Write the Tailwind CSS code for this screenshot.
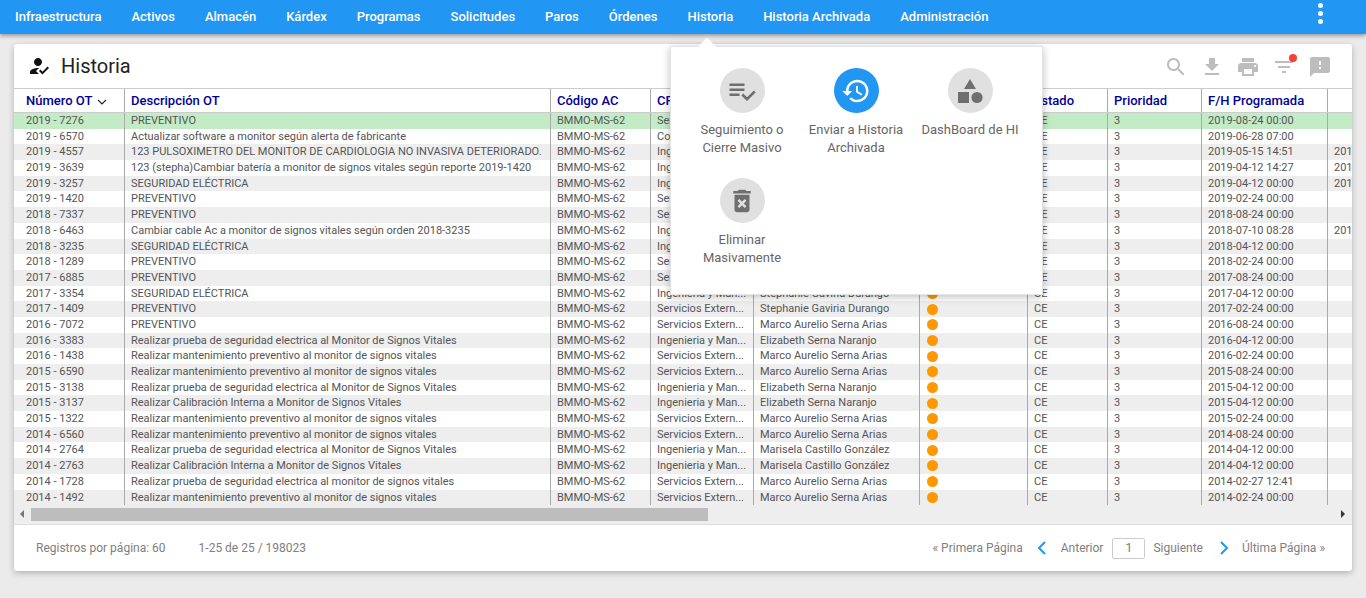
<!DOCTYPE html>
<html lang="es">
<head>
    <meta charset="UTF-8">
    <title>Historia</title>
    <script src="https://cdn.jsdelivr.net/npm/@tailwindcss/browser@4"></script>
</head>
<body class="bg-[#ebebeb] h-[598px] overflow-hidden font-['Roboto',sans-serif]">

<!-- Nav -->
<nav class="h-[34px] bg-[#2196f3] shadow-[0_2px_4px_rgba(0,0,0,0.35)] flex items-center pl-[15px] relative z-20">
    <div class="flex gap-[30px] text-white text-[13px] font-medium leading-[34px]">
        <a>Infraestructura</a><a>Activos</a><a>Almacén</a><a>Kárdex</a><a>Programas</a><a>Solicitudes</a><a>Paros</a><a>Órdenes</a><a>Historia</a><a>Historia Archivada</a><a>Administración</a>
    </div>
    <div class="ml-auto mr-[43px] mb-[8px] flex flex-col gap-[3px]">
        <span class="w-[5px] h-[5px] rounded-full bg-white"></span>
        <span class="w-[5px] h-[5px] rounded-full bg-white"></span>
        <span class="w-[5px] h-[5px] rounded-full bg-white"></span>
    </div>
</nav>

<!-- Card -->
<main class="mt-[10px] mx-[14px] w-[1338px] h-[527px] bg-white rounded-[3px] shadow-[0_2px_6px_rgba(0,0,0,0.25)] flex flex-col overflow-hidden">
    <div class="h-[44px] shrink-0 flex items-center pl-[13px] pr-[20px]">
        <svg class="w-[24px] h-[24px] fill-[#111]" viewBox="0 0 24 24"><path d="M9 17l3-2.94c-.39-.04-.68-.06-1-.06-2.67 0-8 1.34-8 4v2h9l-3-3zm2-5c2.21 0 4-1.79 4-4s-1.79-4-4-4-4 1.79-4 4 1.79 4 4 4zm4.47 8.5L12 17l1.4-1.41 2.07 2.07 5.13-5.16 1.4 1.41z"/></svg>
        <h1 class="ml-[10px] text-[20px] text-[#222] leading-none">Historia</h1>
        <div class="ml-auto flex gap-[12px] pt-[2px] fill-[#bdbdbd]">
            <svg class="w-[24px] h-[24px]" viewBox="0 0 24 24"><path d="M15.5 14h-.79l-.28-.27C15.41 12.59 16 11.11 16 9.5 16 5.91 13.09 3 9.5 3S3 5.91 3 9.5 5.91 16 9.5 16c1.61 0 3.09-.59 4.23-1.57l.27.28v.79l5 4.99L20.49 19l-4.99-5zm-6 0C7.01 14 5 11.99 5 9.5S7.01 5 9.5 5 14 7.01 14 9.5 11.99 14 9.5 14z"/></svg>
            <svg class="w-[24px] h-[24px]" viewBox="0 0 24 24"><path d="M19 9h-4V3H9v6H5l7 7 7-7zM5 18v2h14v-2H5z"/></svg>
            <svg class="w-[24px] h-[24px]" viewBox="0 0 24 24"><path d="M19 8H5c-1.66 0-3 1.34-3 3v6h4v4h12v-4h4v-6c0-1.66-1.34-3-3-3zm-3 11H8v-5h8v5zm3-7c-.55 0-1-.45-1-1s.45-1 1-1 1 .45 1 1-.45 1-1 1zm-1-9H6v4h12V3z"/></svg>
            <div class="relative w-[24px] h-[24px]">
                <svg class="w-[24px] h-[24px]" viewBox="0 0 24 24"><path d="M10 18h4v-2h-4v2zM3 6v2h18V6H3zm3 7h12v-2H6v2z"/></svg>
                <span class="absolute top-[-1px] right-[-1px] w-[8px] h-[8px] rounded-full bg-[#f44336]"></span>
            </div>
            <svg class="w-[24px] h-[24px]" viewBox="0 0 24 24"><path d="M20 2H4c-1.1 0-1.99.9-1.99 2L2 22l4-4h14c1.1 0 2-.9 2-2V4c0-1.1-.9-2-2-2zm-7 12h-2v-2h2v2zm0-4h-2V6h2v4z"/></svg>
        </div>
    </div>

    <!-- Table -->
    <div class="flex-1 min-h-0 bg-[#eeeeee] overflow-hidden flex flex-col">
        <div class="w-[1373px]">
            <div class="grid grid-cols-[111px_426px_100px_103px_166px_108px_80px_94px_126px_59px] h-[25px] bg-white border-t border-b border-[#cccccc] text-[13px] font-medium text-[#000099] leading-[23px]">
                <div class="px-[12px] border-r border-[#aaaaaa] flex items-center gap-[5px]">Número OT
                    <svg class="w-[10px] h-[10px] mt-[2px]" viewBox="0 0 10 10" fill="none" stroke="#222" stroke-width="1.1"><path d="M1 3l4 4 4-4"/></svg>
                </div>
                <div class="px-[6px] border-r border-[#aaaaaa]">Descripción OT</div>
                <div class="px-[6px] border-r border-[#aaaaaa]">Código AC</div>
                <div class="px-[6px] border-r border-[#aaaaaa]">CR</div>
                <div class="px-[6px] border-r border-[#aaaaaa]">Responsable</div>
                <div class="px-[6px] border-r border-[#aaaaaa]">Semáforo</div>
                <div class="px-[6px] border-r border-[#aaaaaa]">Estado</div>
                <div class="px-[6px] border-r border-[#aaaaaa]">Prioridad</div>
                <div class="px-[6px] border-r border-[#aaaaaa]">F/H Programada</div>
                <div></div>
            </div>
            <div id="rows"></div>
        </div>
        <!-- Scrollbar -->
        <div class="mt-auto h-[18px] shrink-0 flex items-center pb-[2px] relative">
            <span class="ml-[6px] w-0 h-0 border-y-[4px] border-y-transparent border-r-[4px] border-r-[#777]"></span>
            <div class="ml-[7px] w-[677px] h-[13px] bg-[#bdbdbd]"></div>
            <span class="ml-auto mr-[7px] w-0 h-0 border-y-[4px] border-y-transparent border-l-[4px] border-l-[#333]"></span>
        </div>
    </div>

    <!-- Footer -->
    <div class="h-[47px] shrink-0 border-t border-[#dddddd] flex items-center pl-[22px] pr-[27px] text-[12px] text-[#808080]">
        <span>Registros por página: 60</span>
        <span class="ml-[33px]">1-25 de 25 / 198023</span>
        <div class="ml-auto flex items-center">
            <span>« Primera Página</span>
            <svg class="ml-[14px] w-[10px] h-[14px]" viewBox="0 0 10 14" fill="none" stroke="#2196f3" stroke-width="2"><path d="M8 1L2 7l6 6"/></svg>
            <span class="ml-[14px]">Anterior</span>
            <span class="ml-[9px] w-[33px] h-[21px] border border-[#cccccc] rounded-[2px] flex items-center justify-center text-[13px]">1</span>
            <span class="ml-[8px]">Siguiente</span>
            <svg class="ml-[16px] w-[10px] h-[14px]" viewBox="0 0 10 14" fill="none" stroke="#2196f3" stroke-width="2"><path d="M2 1l6 6-6 6"/></svg>
            <span class="ml-[13px]">Última Página »</span>
        </div>
    </div>
</main>

<!-- Historia menu -->
<div class="absolute left-[670px] top-[46px] w-[373px] h-[249px] bg-white border border-[#e4e4e4] shadow-[0_2px_8px_rgba(0,0,0,0.25)] z-10 pt-[21px] pl-[14px]">
    <span class="absolute left-[27px] top-[-10px] w-0 h-0 border-x-[9px] border-x-transparent border-b-[10px] border-b-white"></span>
    <div class="grid grid-cols-[114px_114px_114px] auto-rows-[110px] text-[13px] leading-[18px] text-[#666666] text-center">
        <a class="flex flex-col items-center">
            <span class="w-[45px] h-[45px] rounded-full bg-[#e0e0e0] flex items-center justify-center mb-[8px]">
                <svg class="w-[30px] h-[30px] fill-[#6f6f6f]" viewBox="0 0 24 24"><path d="M14 10H2v2h12v-2zm0-4H2v2h12V6zM2 16h8v-2H2v2zm19.5-4.5L23 13l-6.99 7-4.51-4.5L13 14l3.01 3 5.49-5.5z"/></svg>
            </span>
            <span>Seguimiento o<br>Cierre Masivo</span>
        </a>
        <a class="flex flex-col items-center">
            <span class="w-[45px] h-[45px] rounded-full bg-[#2196f3] flex items-center justify-center mb-[8px]">
                <svg class="w-[30px] h-[30px] fill-white" viewBox="0 0 24 24"><path d="M13 3c-4.97 0-9 4.03-9 9H1l3.89 3.89.07.14L9 12H6c0-3.87 3.13-7 7-7s7 3.13 7 7-3.13 7-7 7c-1.93 0-3.68-.79-4.94-2.06l-1.42 1.42C8.27 19.99 10.51 21 13 21c4.97 0 9-4.03 9-9s-4.03-9-9-9zm-1 5v5l4.28 2.54.72-1.21-3.5-2.08V8H12z"/></svg>
            </span>
            <span>Enviar a Historia<br>Archivada</span>
        </a>
        <a class="flex flex-col items-center">
            <span class="w-[45px] h-[45px] rounded-full bg-[#e0e0e0] flex items-center justify-center mb-[8px]">
                <svg class="w-[26px] h-[26px] fill-[#6f6f6f]" viewBox="0 0 26 26"><path d="M13 1l6 10H7z"/><rect x="1" y="14" width="11" height="11"/><circle cx="20" cy="19.5" r="5.6"/></svg>
            </span>
            <span class="whitespace-nowrap">DashBoard de HI</span>
        </a>
        <a class="flex flex-col items-center">
            <span class="w-[45px] h-[45px] rounded-full bg-[#e0e0e0] flex items-center justify-center mb-[8px]">
                <svg class="w-[30px] h-[30px] fill-[#6f6f6f]" viewBox="0 0 24 24"><path d="M6 19c0 1.1.9 2 2 2h8c1.1 0 2-.9 2-2V7H6v12zm2.46-7.12l1.41-1.41L12 12.59l2.12-2.12 1.41 1.41L13.41 14l2.12 2.12-1.41 1.41L12 15.41l-2.12 2.12-1.41-1.41L10.59 14l-2.13-2.12zM15.5 4l-1-1h-5l-1 1H5v2h14V4z"/></svg>
            </span>
            <span>Eliminar<br>Masivamente</span>
        </a>
    </div>
</div>

<script>
const SE = "Servicios Extern...", IM = "Ingenieria y Man...", CO = "Contratos";
const SG = "Stephanie Gaviria Durango", MS = "Marco Aurelio Serna Arias", EN = "Elizabeth Serna Naranjo", MC = "Marisela Castillo González";
const PREV = "PREVENTIVO", SEG = "SEGURIDAD ELÉCTRICA";
const MANT = "Realizar mantenimiento preventivo al monitor de signos vitales";
const PRU = "Realizar prueba de seguridad electrica al Monitor de Signos Vitales";
const CAL = "Realizar Calibración Interna a Monitor de Signos Vitales";

const data = [
    ["2019 - 7276", PREV, SE, SG, "2019-08-24 00:00", ""],
    ["2019 - 6570", "Actualizar software a monitor según alerta de fabricante", CO, SG, "2019-06-28 07:00", ""],
    ["2019 - 4557", "123 PULSOXIMETRO DEL MONITOR DE CARDIOLOGIA NO INVASIVA DETERIORADO.", IM, SG, "2019-05-15 14:51", "2019-05-15"],
    ["2019 - 3639", "123 (stepha)Cambiar batería a monitor de signos vitales según reporte 2019-1420", IM, SG, "2019-04-12 14:27", "2019-04-12"],
    ["2019 - 3257", SEG, IM, SG, "2019-04-12 00:00", "2019-04-12"],
    ["2019 - 1420", PREV, SE, SG, "2019-02-24 00:00", ""],
    ["2018 - 7337", PREV, SE, SG, "2018-08-24 00:00", ""],
    ["2018 - 6463", "Cambiar cable Ac a monitor de signos vitales según orden 2018-3235", IM, SG, "2018-07-10 08:28", "2018-07-10"],
    ["2018 - 3235", SEG, IM, SG, "2018-04-12 00:00", ""],
    ["2018 - 1289", PREV, SE, SG, "2018-02-24 00:00", ""],
    ["2017 - 6885", PREV, SE, SG, "2017-08-24 00:00", ""],
    ["2017 - 3354", SEG, IM, SG, "2017-04-12 00:00", ""],
    ["2017 - 1409", PREV, SE, SG, "2017-02-24 00:00", ""],
    ["2016 - 7072", PREV, SE, MS, "2016-08-24 00:00", ""],
    ["2016 - 3383", PRU, IM, EN, "2016-04-12 00:00", ""],
    ["2016 - 1438", MANT, SE, MS, "2016-02-24 00:00", ""],
    ["2015 - 6590", MANT, SE, MS, "2015-08-24 00:00", ""],
    ["2015 - 3138", PRU, IM, EN, "2015-04-12 00:00", ""],
    ["2015 - 3137", CAL, IM, EN, "2015-04-12 00:00", ""],
    ["2015 - 1322", MANT, SE, MS, "2015-02-24 00:00", ""],
    ["2014 - 6560", MANT, SE, MS, "2014-08-24 00:00", ""],
    ["2014 - 2764", PRU, IM, MC, "2014-04-12 00:00", ""],
    ["2014 - 2763", CAL, IM, MC, "2014-04-12 00:00", ""],
    ["2014 - 1728", "Realizar prueba de seguridad electrica al monitor de signos vitales", SE, MS, "2014-02-27 12:41", ""],
    ["2014 - 1492", MANT, SE, MS, "2014-02-24 00:00", ""]
];

document.getElementById("rows").innerHTML = data.map((r, i) => {
    let bg = i == 0 ? "bg-[#c3ebc6]" : (i % 2 == 0 ? "bg-[#eeeeee]" : "bg-white");
    return `<div class="grid grid-cols-[111px_426px_100px_103px_166px_108px_80px_94px_126px_59px] h-[15.7px] ${bg} text-[11px] leading-[15.7px] text-[#555555]">
        <div class="px-[12px] border-r border-[#aaaaaa]">${r[0]}</div>
        <div class="px-[6px] border-r border-[#aaaaaa] whitespace-nowrap overflow-hidden">${r[1]}</div>
        <div class="px-[6px] border-r border-[#aaaaaa]">BMMO-MS-62</div>
        <div class="px-[6px] border-r border-[#aaaaaa] whitespace-nowrap overflow-hidden">${r[2]}</div>
        <div class="px-[6px] border-r border-[#aaaaaa] whitespace-nowrap overflow-hidden">${r[3]}</div>
        <div class="pl-[7px] border-r border-[#aaaaaa] flex items-center"><span class="w-[11px] h-[11px] rounded-full bg-[#ff9800]"></span></div>
        <div class="px-[6px] border-r border-[#aaaaaa]">CE</div>
        <div class="px-[6px] border-r border-[#aaaaaa]">3</div>
        <div class="px-[6px] border-r border-[#aaaaaa]">${r[4]}</div>
        <div class="px-[6px] whitespace-nowrap overflow-hidden">${r[5]}</div>
    </div>`;
}).join("");
</script>
</body>
</html>
